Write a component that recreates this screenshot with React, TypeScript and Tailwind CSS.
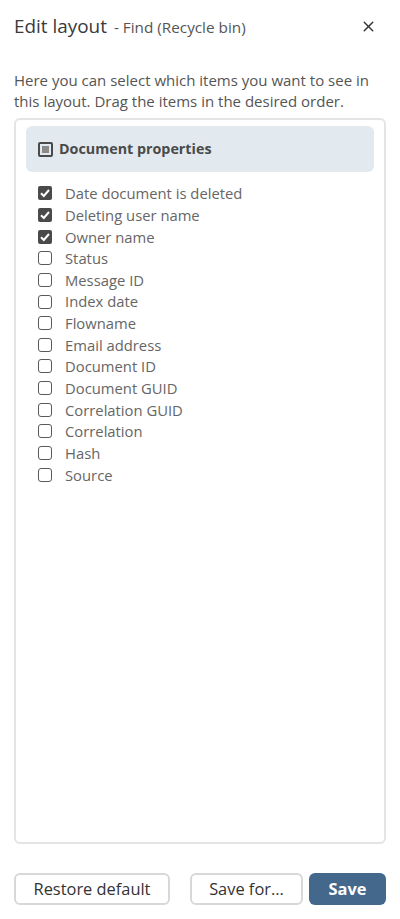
import { X } from "lucide-react";

const items = [
  { label: "Date document is deleted", checked: true },
  { label: "Deleting user name", checked: true },
  { label: "Owner name", checked: true },
  { label: "Status", checked: false },
  { label: "Message ID", checked: false },
  { label: "Index date", checked: false },
  { label: "Flowname", checked: false },
  { label: "Email address", checked: false },
  { label: "Document ID", checked: false },
  { label: "Document GUID", checked: false },
  { label: "Correlation GUID", checked: false },
  { label: "Correlation", checked: false },
  { label: "Hash", checked: false },
  { label: "Source", checked: false },
];

const Box = ({ checked }: { checked: boolean }) =>
  checked ? (
    <span className="flex h-[14px] w-[14px] shrink-0 items-center justify-center rounded-[2px] bg-[#4a4a4a]">
      <svg viewBox="0 0 14 14" className="h-[14px] w-[14px]" fill="none" stroke="#ffffff" strokeWidth="2">
        <path d="M3 7.2 L5.8 10 L11 4" />
      </svg>
    </span>
  ) : (
    <span className="h-[14px] w-[14px] shrink-0 rounded-[3px] border border-[#5a5a5a] bg-white" />
  );

export default function App() {
  return (
    <div className="flex h-[919px] w-[400px] flex-col bg-white px-[14px] font-['Open_Sans',sans-serif] text-[#555555]">
      {/* Header */}
      <div className="flex h-[53px] items-center justify-between">
        <div className="flex items-baseline">
          <h1 className="text-[18.9px] font-medium text-[#3a3a3a]">Edit layout</h1>
          <span className="ml-[7px] text-[15.3px] text-[#555555]">- Find (Recycle bin)</span>
        </div>
        <X className="mr-[9px] h-[17px] w-[17px] text-[#333333]" strokeWidth={2} />
      </div>

      <p className="mt-[17px] text-[15px] leading-[21px] text-[#555555]">
        Here you can select which items you want to see in this layout. Drag the items in the desired order.
      </p>

      {/* Panel */}
      <div className="mt-[6px] h-[726px] rounded-[6px] border-2 border-[#e4e4e4] px-[10px] pt-[6px]">
        <div className="flex h-[46px] items-center gap-[6px] rounded-[6px] bg-[#e2eaef] pl-[12px]">
          <span className="flex h-[15px] w-[15px] items-center justify-center rounded-[2px] border-2 border-[#4a4a4a]">
            <span className="h-[7px] w-[7px] bg-[#8a8a8a]" />
          </span>
          <span className="text-[14.3px] font-bold text-[#4a4a4a]">Document properties</span>
        </div>
        <ul className="mt-[10.5px] flex flex-col">
          {items.map((item) => (
            <li key={item.label} className="flex h-[21.65px] items-center gap-[13px] pl-[12px]">
              <Box checked={item.checked} />
              <span className="text-[14.8px] text-[#666666]">{item.label}</span>
            </li>
          ))}
        </ul>
      </div>

      {/* Footer */}
      <div className="mt-[29px] flex items-center">
        <button className="h-[32px] w-[156px] rounded-[6px] border-2 border-[#d8d8d8] bg-white text-[16.4px] text-[#333333]">
          Restore default
        </button>
        <button className="ml-[20px] h-[32px] w-[113px] rounded-[6px] border-2 border-[#d8d8d8] bg-white text-[16.4px] text-[#333333]">
          Save for...
        </button>
        <button className="ml-[6px] h-[32px] w-[77px] rounded-[6px] bg-[#44688c] text-[16.4px] font-bold text-white">
          Save
        </button>
      </div>
    </div>
  );
}
